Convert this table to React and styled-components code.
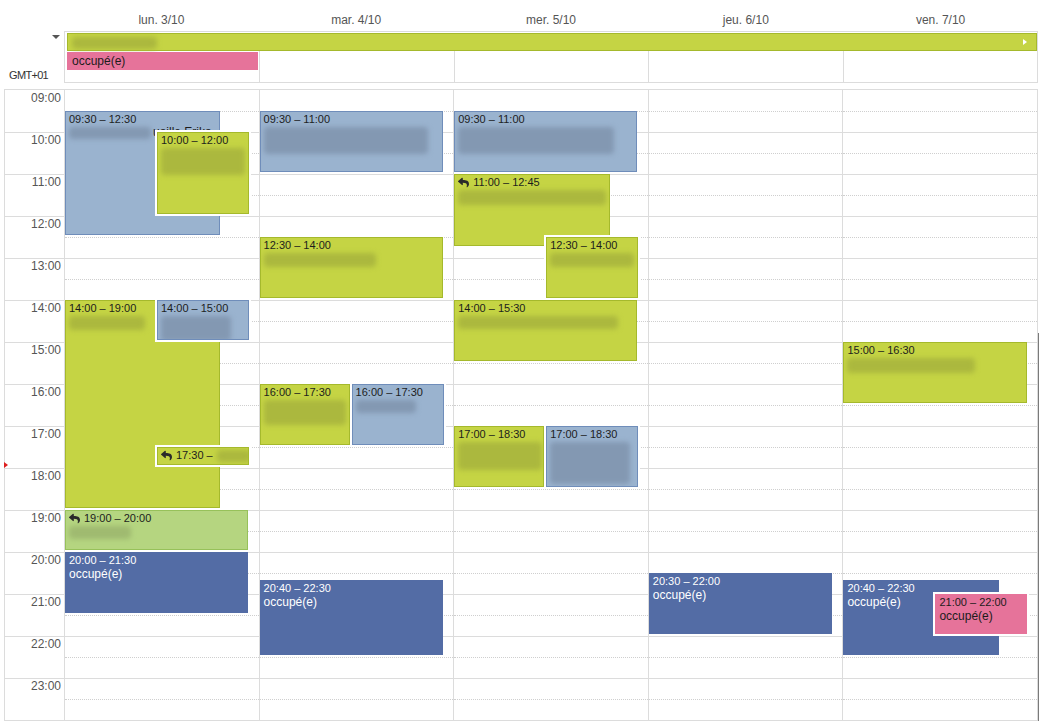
import React from 'react';
import styled, { createGlobalStyle, css } from 'styled-components';
import { FaReply } from 'react-icons/fa';

const GlobalStyle = createGlobalStyle`
  html, body { margin: 0; padding: 0; background: #fff; }
  body { font-family: "Liberation Sans", Arial, sans-serif; }
  *, *::before, *::after { box-sizing: border-box; }
`;

const SLOT = 42;
const FIRST_HOUR = 9;
const HOURS = Array.from({ length: 15 }, (_, i) => FIRST_HOUR + i);
const DAYS = ['lun. 3/10', 'mar. 4/10', 'mer. 5/10', 'jeu. 6/10', 'ven. 7/10'];

const palette = {
  blue: { bg: '#9ab3cf', border: '#6f8dba', text: '#1c1c1c', blur: '#8398b2' },
  green: { bg: '#c5d444', border: '#a5b92c', text: '#1c1c1c', blur: '#abb83e' },
  lime: { bg: '#b5d580', border: '#97c15a', text: '#1c1c1c', blur: '#9fba70' },
  navy: { bg: '#536ca5', border: '#536ca5', text: '#ffffff', blur: '#536ca5' },
  pink: { bg: '#e6739a', border: '#e6739a', text: '#1c1c1c', blur: '#e6739a' },
};

const EVENTS = [
  [
    { s: 9.5, e: 12.5, c: 'blue', l: 0, w: 155, time: '09:30 – 12:30', blur: [{ w: 82, h: 12 }], peek: 'uaille Erika' },
    { s: 10, e: 12, c: 'green', l: 92, w: 92, ring: true, time: '10:00 – 12:00', blur: [{ w: 84, h: 27 }] },
    { s: 14, e: 19, c: 'green', l: 0, w: 155, time: '14:00 – 19:00', blur: [{ w: 76, h: 14 }] },
    { s: 14, e: 15, c: 'blue', l: 92, w: 92, ring: true, time: '14:00 – 15:00', blur: [{ w: 70, h: 25 }] },
    { s: 17.5, e: 17.5, h: 18, c: 'green', l: 92, w: 92, ring: true, reply: true, time: '17:30 –', inlineBlur: 34 },
    { s: 19, e: 20, c: 'lime', l: 0, w: 183, reply: true, time: '19:00 – 20:00', blur: [{ w: 62, h: 13 }] },
    { s: 20, e: 21.5, c: 'navy', l: 0, w: 183, time: '20:00 – 21:30', title: 'occupé(e)' },
  ],
  [
    { s: 9.5, e: 11, c: 'blue', l: 0, w: 183, time: '09:30 – 11:00', blur: [{ w: 164, h: 27 }] },
    { s: 12.5, e: 14, c: 'green', l: 0, w: 183, time: '12:30 – 14:00', blur: [{ w: 112, h: 14 }] },
    { s: 16, e: 17.5, c: 'green', l: 0, w: 90, time: '16:00 – 17:30', blur: [{ w: 82, h: 25 }] },
    { s: 16, e: 17.5, c: 'blue', l: 92, w: 92, ring: true, time: '16:00 – 17:30', blur: [{ w: 60, h: 13 }] },
    { s: 20 + 40 / 60, e: 22.5, c: 'navy', l: 0, w: 183, time: '20:40 – 22:30', title: 'occupé(e)' },
  ],
  [
    { s: 9.5, e: 11, c: 'blue', l: 0, w: 183, time: '09:30 – 11:00', blur: [{ w: 156, h: 27 }] },
    { s: 11, e: 12.75, c: 'green', l: 0, w: 156, reply: true, time: '11:00 – 12:45', blur: [{ w: 148, h: 15 }] },
    { s: 12.5, e: 14, c: 'green', l: 92, w: 92, ring: true, time: '12:30 – 14:00', blur: [{ w: 84, h: 14 }] },
    { s: 14, e: 15.5, c: 'green', l: 0, w: 183, time: '14:00 – 15:30', blur: [{ w: 160, h: 13 }] },
    { s: 17, e: 18.5, c: 'green', l: 0, w: 90, time: '17:00 – 18:30', blur: [{ w: 84, h: 28 }] },
    { s: 17, e: 18.5, c: 'blue', l: 92, w: 92, ring: true, time: '17:00 – 18:30', blur: [{ w: 80, h: 42 }] },
  ],
  [
    { s: 20.5, e: 22, c: 'navy', l: 0, w: 183, time: '20:30 – 22:00', title: 'occupé(e)' },
  ],
  [
    { s: 15, e: 16.5, c: 'green', l: 0, w: 184, time: '15:00 – 16:30', blur: [{ w: 128, h: 15 }] },
    { s: 20 + 40 / 60, e: 22.5, c: 'navy', l: 0, w: 156, time: '20:40 – 22:30', title: 'occupé(e)' },
    { s: 21, e: 22, c: 'pink', l: 92, w: 92, ring: true, time: '21:00 – 22:00', title: 'occupé(e)' },
  ],
];

const Page = styled.div`
  width: 1039px;
  height: 722px;
  overflow: hidden;
  background: #fff;
`;

const HeaderRow = styled.div`
  display: grid;
  grid-template-columns: 64px repeat(5, 1fr);
  width: 1038px;
  height: 31px;
`;

const DayLabel = styled.div`
  padding-top: 13px;
  text-align: center;
  font-size: 12px;
  line-height: 14px;
  color: #555;
`;

const AllDayRow = styled.div`
  display: grid;
  grid-template-columns: 64px 1fr;
  width: 1038px;
  height: 52px;
`;

const AllDayGutter = styled.div`
  display: flex;
  flex-direction: column;
  align-items: flex-end;
  justify-content: space-between;
  padding: 4px 4px 1px 0;
`;

const DropCaret = styled.span`
  width: 0;
  height: 0;
  border-left: 4px solid transparent;
  border-right: 4px solid transparent;
  border-top: 4px solid #555;
`;

const Tz = styled.span`
  margin-right: 12px;
  font-size: 11px;
  line-height: 13px;
  letter-spacing: -0.7px;
  color: #333;
`;

const AllDayBox = styled.div`
  display: grid;
  grid-template-columns: repeat(5, 1fr);
  grid-template-rows: 18px 18px 1fr;
  row-gap: 1px;
  padding-top: 1px;
  border: 1px solid #dcdcdc;
`;

const ColSep = styled.div`
  grid-row: 1 / -1;
  grid-column: ${p => p.$col};
  border-left: 1px solid ${p => (p.$col === 1 ? 'transparent' : '#dcdcdc')};
`;

const AllDayBar = styled.div`
  position: relative;
  z-index: 1;
  grid-row: ${p => p.$row};
  grid-column: ${p => p.$span};
  display: flex;
  align-items: center;
  justify-content: space-between;
  margin: 0 ${p => (p.$row === 2 ? '1px' : '0')} 0 2px;
  padding: 0 9px 0 4px;
  background: ${p => palette[p.$c].bg};
  border: 1px solid ${p => palette[p.$c].border};
  font-size: 12px;
  color: #1c1c1c;
`;

const MoreCaret = styled.span`
  width: 0;
  height: 0;
  border-top: 3px solid transparent;
  border-bottom: 3px solid transparent;
  border-left: 4px solid #fff;
`;

const Body = styled.div`
  position: relative;
  display: grid;
  grid-template-columns: 59px repeat(5, 1fr);
  width: 1034px;
  margin: 6px 0 0 4px;
  border: 1px solid #dcdcdc;

  &::after {
    content: '';
    position: absolute;
    right: -2px;
    top: 243px;
    bottom: -1px;
    width: 1px;
    background: #7a7a7a;
  }
`;

const Gutter = styled.div`
  position: relative;
`;

const TimeSlot = styled.div`
  height: ${SLOT}px;
  padding-right: 3px;
  border-top: 1px solid #dcdcdc;
  text-align: right;
  font-size: 12px;
  line-height: 15px;
  color: #555;

  &:first-child { border-top-color: transparent; }
`;

const NowMarker = styled.span`
  position: absolute;
  left: -1px;
  top: 372px;
  width: 0;
  height: 0;
  border-top: 3px solid transparent;
  border-bottom: 3px solid transparent;
  border-left: 4px solid #dd1f1f;
`;

const DayColumn = styled.div`
  position: relative;
  border-left: 1px solid #dcdcdc;
`;

const HourSlot = styled.div`
  position: relative;
  height: ${SLOT}px;
  border-top: 1px solid #dcdcdc;

  &:first-child { border-top-color: transparent; }

  &::after {
    content: '';
    position: absolute;
    left: 0;
    right: 0;
    top: 20px;
    border-top: 1px dotted #cfcfcf;
  }
`;

const Event = styled.div`
  position: absolute;
  overflow: hidden;
  padding: 1px 3px;
  background: ${p => palette[p.$c].bg};
  border: 1px solid ${p => palette[p.$c].border};
  color: ${p => palette[p.$c].text};
  font-size: 11px;
  line-height: 13px;
  ${p => p.$ring && css`box-shadow: 0 0 0 2px #fff;`}
`;

const TimeRow = styled.div`
  display: flex;
  align-items: center;
  gap: 4px;
  white-space: nowrap;

  svg { flex: none; color: #2a2a2a; }
`;

const Title = styled.div`
  font-size: 12px;
  line-height: 14px;
  white-space: nowrap;
`;

const BlurRow = styled.div`
  display: flex;
  align-items: flex-start;
  gap: 2px;
  white-space: nowrap;
`;

const Blur = styled.span`
  display: block;
  flex: none;
  width: ${p => p.$w}px;
  height: ${p => p.$h}px;
  margin-top: 1px;
  border-radius: 4px;
  background: ${p => palette[p.$c].blur};
  filter: blur(2.5px);
`;

const Peek = styled.span`
  display: block;
  height: 10px;
  overflow: hidden;
  font-size: 12px;
  line-height: 13px;
  color: #1c1c1c;
`;

function CalEvent({ ev }) {
  const top = (ev.s - FIRST_HOUR) * SLOT;
  const height = ev.h ?? (ev.e - ev.s) * SLOT - 2;
  return (
    <Event $c={ev.c} $ring={ev.ring} style={{ top, height, left: ev.l, width: ev.w }}>
      <TimeRow>
        {ev.reply && <FaReply size={11} />}
        <span>{ev.time}</span>
        {ev.inlineBlur && <Blur $c={ev.c} $w={ev.inlineBlur} $h={12} />}
      </TimeRow>
      {ev.title && <Title>{ev.title}</Title>}
      {(ev.blur || []).map((b, i) => (
        <BlurRow key={i}>
          <Blur $c={ev.c} $w={b.w} $h={b.h} />
          {i === 0 && ev.peek && <Peek>{ev.peek}</Peek>}
        </BlurRow>
      ))}
    </Event>
  );
}

export default function App() {
  return (
    <Page>
      <GlobalStyle />
      <HeaderRow>
        <div />
        {DAYS.map(d => (
          <DayLabel key={d}>{d}</DayLabel>
        ))}
      </HeaderRow>

      <AllDayRow>
        <AllDayGutter>
          <DropCaret />
          <Tz>GMT+01</Tz>
        </AllDayGutter>
        <AllDayBox>
          {DAYS.map((d, i) => (
            <ColSep key={d} $col={i + 1} />
          ))}
          <AllDayBar $row={1} $span="1 / -1" $c="green">
            <Blur $c="green" $w={85} $h={12} />
            <MoreCaret />
          </AllDayBar>
          <AllDayBar $row={2} $span="1 / 2" $c="pink">
            <span>occupé(e)</span>
          </AllDayBar>
        </AllDayBox>
      </AllDayRow>

      <Body>
        <Gutter>
          {HOURS.map(h => (
            <TimeSlot key={h}>{String(h).padStart(2, '0')}:00</TimeSlot>
          ))}
          <NowMarker />
        </Gutter>
        {DAYS.map((d, i) => (
          <DayColumn key={d}>
            {HOURS.map(h => (
              <HourSlot key={h} />
            ))}
            {EVENTS[i].map((ev, j) => (
              <CalEvent key={j} ev={ev} />
            ))}
          </DayColumn>
        ))}
      </Body>
    </Page>
  );
}
